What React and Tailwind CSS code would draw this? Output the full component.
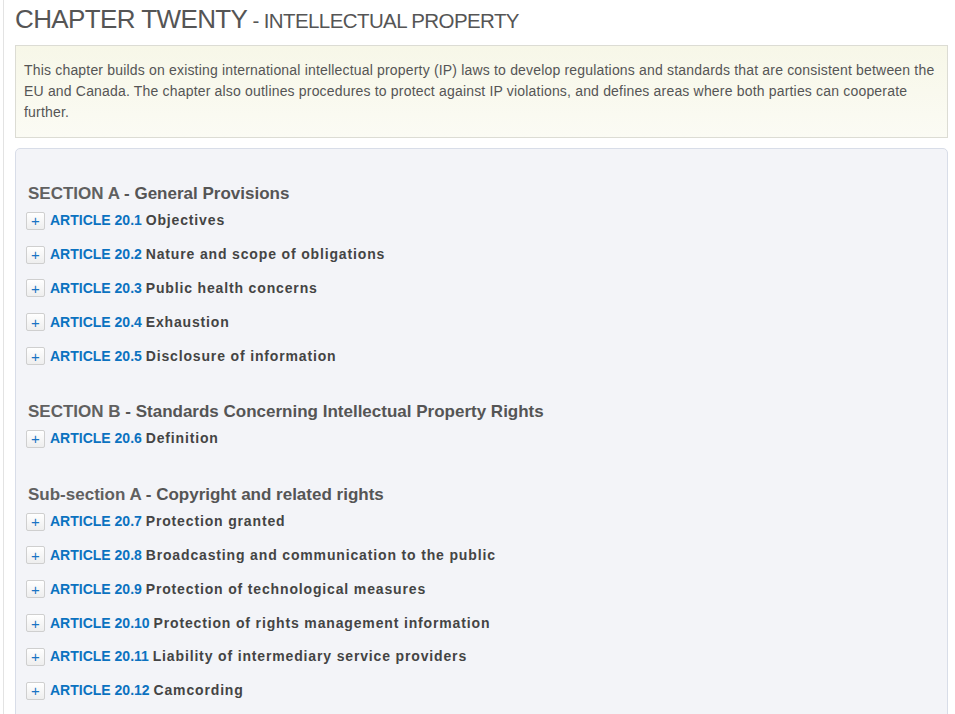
const sections = [
  {
    label: 'SECTION A',
    title: 'General Provisions',
    articles: [
      ['20.1', 'Objectives'],
      ['20.2', 'Nature and scope of obligations'],
      ['20.3', 'Public health concerns'],
      ['20.4', 'Exhaustion'],
      ['20.5', 'Disclosure of information'],
    ],
  },
  {
    label: 'SECTION B',
    title: 'Standards Concerning Intellectual Property Rights',
    articles: [['20.6', 'Definition']],
  },
  {
    label: 'Sub-section A',
    title: 'Copyright and related rights',
    articles: [
      ['20.7', 'Protection granted'],
      ['20.8', 'Broadcasting and communication to the public'],
      ['20.9', 'Protection of technological measures'],
      ['20.10', 'Protection of rights management information'],
      ['20.11', 'Liability of intermediary service providers'],
      ['20.12', 'Camcording'],
    ],
  },
];

function ArticleRow({ num, name }) {
  return (
    <div className="flex items-center h-[33.8px]">
      <button
        type="button"
        className="w-[19px] h-[18px] ml-[-2px] mr-[5px] flex items-center justify-center border border-[#cfcfcf] rounded-[2px] bg-gradient-to-b from-white to-[#eeeeee] text-[#1a74c4] text-[15px] leading-none"
      >
        +
      </button>
      <span className="text-[14px] font-bold">
        <span className="text-[#0b72c0]">ARTICLE {num}</span>{' '}
        <span className="text-[#444] tracking-[0.85px]">{name}</span>
      </span>
    </div>
  );
}

export default function App() {
  return (
    <div className="min-h-[714px] bg-white font-['Liberation_Sans',Arial,sans-serif]">
      <div className="ml-[3px] border-l border-[#e3e3e3] pl-[11px] pr-[7px] pt-[4px]">
        <h1 className="text-[#555] leading-[30px] tracking-[-0.6px]">
          <span className="text-[26px]">CHAPTER TWENTY</span>
          <span className="text-[20.5px]"> - INTELLECTUAL PROPERTY</span>
        </h1>

        <div className="mt-[7px] border border-[#dcdcd4] bg-gradient-to-b from-[#f7f7e8] to-[#fbfbf4] px-[8px] py-[14px] text-[14px] tracking-[0.18px] leading-[21px] text-[#555]">
          This chapter builds on existing international intellectual property (IP) laws to develop regulations and
          standards that are consistent between the EU and Canada. The chapter also outlines procedures to protect
          against IP violations, and defines areas where both parties can cooperate further.
        </div>

        <div className="mt-[10px] border border-[#d8dde8] rounded-[5px] bg-[#f3f4f8] pt-[35px] pl-[12px] pb-[20px] min-h-[600px]">
          {sections.map((s, i) => (
            <div key={s.label} className={i > 0 ? 'mt-[29px]' : ''}>
              <h2 className="text-[17px] leading-[20px] text-[#555]">
                <span className="font-bold text-[#606060]">{s.label}</span>
                <span className="font-bold"> - {s.title}</span>
              </h2>
              {s.articles.map(([num, name]) => (
                <ArticleRow key={num} num={num} name={name} />
              ))}
            </div>
          ))}
        </div>
      </div>
    </div>
  );
}
